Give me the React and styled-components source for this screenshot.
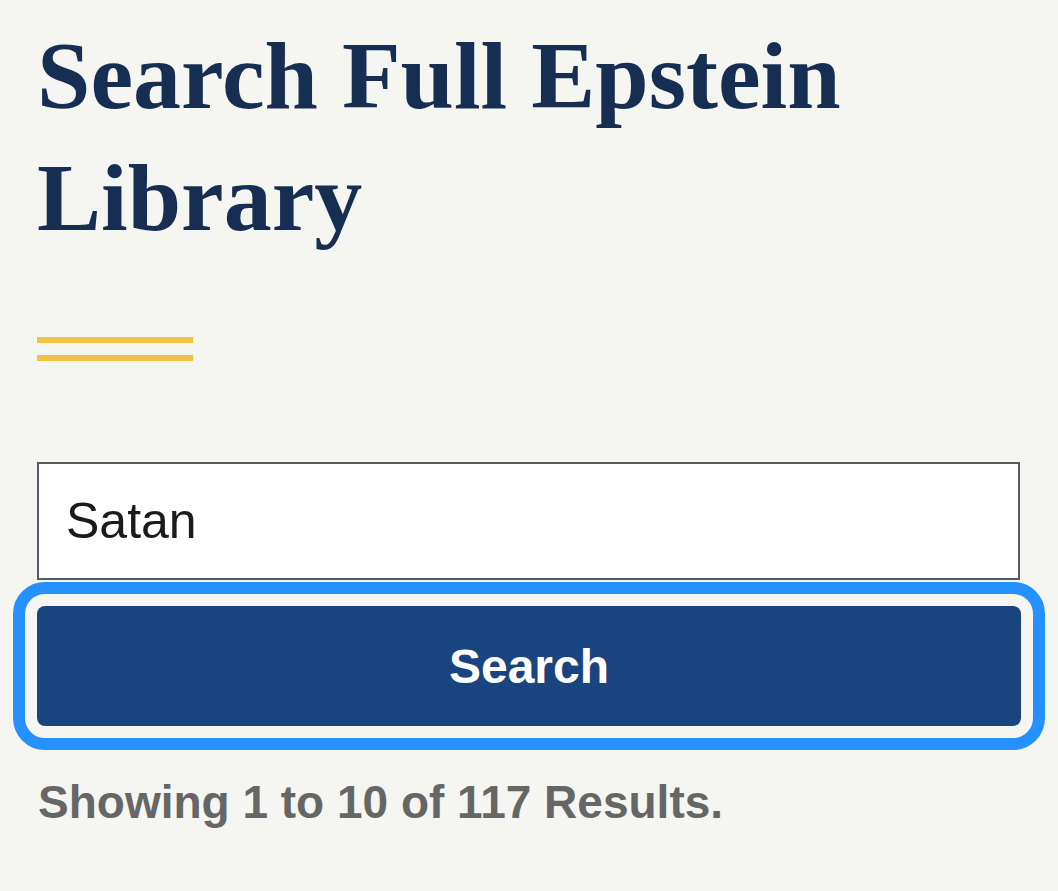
import React, { useState } from "react";
import styled, { createGlobalStyle } from "styled-components";

const GlobalStyle = createGlobalStyle`
  html, body {
    margin: 0;
    padding: 0;
    background: #f5f5f1;
  }
  * {
    box-sizing: border-box;
  }
`;

const Page = styled.main`
  display: flex;
  flex-direction: column;
  padding: 15px 37px 40px 37px;
  min-height: 891px;
  background: #f5f5f1;
`;

const Title = styled.h1`
  margin: 0;
  font-family: "Liberation Serif", "DejaVu Serif", serif;
  font-weight: 700;
  font-size: 96px;
  line-height: 122px;
  color: #162e51;
`;

const Rule = styled.div`
  display: flex;
  flex-direction: column;
  gap: 12px;
  width: 156px;
  margin-top: 78px;
`;

const RuleLine = styled.span`
  display: block;
  height: 6px;
  background: #f3c143;
`;

const Form = styled.form`
  display: flex;
  flex-direction: column;
  gap: 26px;
  margin-top: 101px;
  width: 984px;
`;

const Input = styled.input`
  height: 118px;
  width: 983px;
  border: 2px solid #565c65;
  border-radius: 0;
  background: #fff;
  padding: 0 0 0 27px;
  font-family: "Liberation Sans", Arial, sans-serif;
  font-size: 50px;
  color: #1b1b1b;
  outline: none;
`;

const Button = styled.button`
  height: 120px;
  border: 0;
  border-radius: 8px;
  background: #1a4480;
  color: #fff;
  font-family: "Liberation Sans", Arial, sans-serif;
  font-weight: 700;
  font-size: 48px;
  outline: 12px solid #2491ff;
  outline-offset: 12px;
  cursor: pointer;
`;

const Summary = styled.p`
  margin: 46px 0 0 1px;
  font-family: "Liberation Sans", Arial, sans-serif;
  font-weight: 700;
  font-size: 46px;
  line-height: 60px;
  color: #666666;
`;

export default function App() {
  const [query, setQuery] = useState("Satan");

  return (
    <>
      <GlobalStyle />
      <Page>
        <Title>
          Search Full Epstein
          <br />
          Library
        </Title>
        <Rule>
          <RuleLine />
          <RuleLine />
        </Rule>
        <Form onSubmit={(e) => e.preventDefault()}>
          <Input
            type="search"
            value={query}
            onChange={(e) => setQuery(e.target.value)}
          />
          <Button type="submit">Search</Button>
        </Form>
        <Summary>Showing 1 to 10 of 117 Results.</Summary>
      </Page>
    </>
  );
}
